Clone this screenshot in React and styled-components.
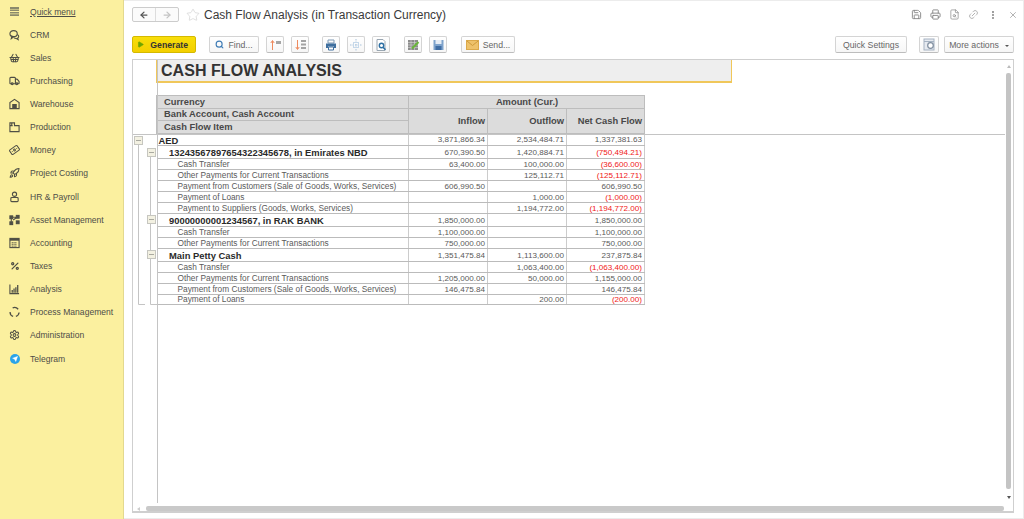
import React from "react";
import styled, { createGlobalStyle } from "styled-components";
import {
  ShoppingBasket, Truck, Banknote, Rocket, Percent, Settings, ArrowLeft, ArrowRight, Star,
  Save, Printer, FileSearch, Link2, EllipsisVertical, X, Search, Play, Send,
} from "lucide-react";

const Global = createGlobalStyle`
  html, body { margin: 0; padding: 0; height: 100%; background: #fff; overflow: hidden; }
  body { font-family: "Liberation Sans", Arial, sans-serif; }
`;
const Page = styled.div`
  width: 1024px; height: 519px; display: flex; box-sizing: border-box; overflow: hidden; color: #333;
`;
const Sidebar = styled.nav`
  width: 124px; flex: none; background: #fbf09f; border-right: 1px solid #e3d98f; box-sizing: border-box;
  display: flex; flex-direction: column;
`;
const NavRow = styled.div`
  height: 23.15px; display: flex; align-items: center; padding-left: 9px; gap: 10px; flex: none;
  font-size: 8.55px; color: #4d4d48; text-decoration: ${p => (p.$link ? "underline" : "none")};
  &:first-child { height: 23px; }
`;
const NavIcon = styled.span`
  width: 11px; height: 11px; display: flex; align-items: center; justify-content: center; color: #4f4f45; flex: none;
`;
const TgDot = styled.span`
  width: 10px; height: 10px; border-radius: 50%; background: #2aa4e8; display: flex; align-items: center; justify-content: center; color: #fff;
`;
const Main = styled.main`
  flex: 1; min-width: 0; display: flex; flex-direction: column; padding: 0 9px 5px 8px;
  border-top: 1px solid #ececec; border-right: 1px solid #ececec; border-bottom: 1px solid #ececec; box-sizing: border-box;
`;
const TitleBar = styled.header`
  height: 27px; flex: none; display: flex; align-items: center;
`;
const NavGroup = styled.div`
  display: flex; width: 47px; height: 15px; border: 1px solid #ccc; border-radius: 2px; box-sizing: border-box; background: #fbfbfb; margin-right: 7px;
`;
const NavBtn = styled.span`
  flex: 1; display: flex; align-items: center; justify-content: center; color: ${p => p.$off ? "#c4c4c4" : "#555"};
  & + & { border-left: 1px solid #ddd; }
`;
const Title = styled.h1`
  margin: 0 0 0 4px; font-size: 12px; font-weight: 400; color: #3a3a3a; white-space: nowrap;
`;
const TopTools = styled.div`
  margin: 0 -4px 0 auto; display: flex; gap: 8.3px; align-items: center; color: #858585;
`;
const TopTool = styled.span`
  width: 11px; height: 11px; display: flex; align-items: center; justify-content: center;
`;
const Toolbar = styled.div`
  height: 17px; margin-top: 8px; flex: none; display: flex; align-items: stretch;
`;
const Btn = styled.button`
  height: 17px; box-sizing: border-box; padding: 0; margin: 0 0 0 ${p => p.$gap || 0}px;
  width: ${p => p.$w}px; display: flex; align-items: center; justify-content: center; gap: 4px; flex: none;
  background: linear-gradient(#fff, #f6f6f6); border: 1px solid #d4d4d4; border-bottom-color: #bdbdbd; border-radius: 2px;
  font: 8.7px "Liberation Sans", Arial, sans-serif; color: #666;
`;
const Generate = styled(Btn)`
  background: linear-gradient(#f8de0a, #f3cf00); border-color: #d4b900; color: #333; font-weight: 700;
`;
const Caret = styled.span`
  width: 0; height: 0; border-left: 2px solid transparent; border-right: 2px solid transparent; border-top: 2px solid #555; margin-left: 2px; margin-top: 2px;
`;
const Spacer = styled.div` margin-left: auto; `;
const Panel = styled.section`
  position: relative; flex: 1; margin-top: 6px; border: 1px solid #cfcfcf; border-bottom-width: 2px; box-sizing: border-box; overflow: hidden; background: #fff;
`;
const Sheet = styled.div`
  padding-left: 23px;
`;
const Heading = styled.div`
  width: 576px; height: 23px; box-sizing: border-box; border: 1px solid #f0c75a; border-top: 0; border-bottom-width: 2px; background: #eee;
  font-size: 16px; font-weight: 700; color: #333; padding: 2px 0 0 4px; line-height: 18px; letter-spacing: 0.05px;
`;
const Table = styled.table`
  border-collapse: collapse; table-layout: fixed; width: 488px; margin-top: 12px; font-size: 8px; color: #444;
`;
const Th = styled.th`
  height: ${p => p.$h || 12.6}px; padding: 0 2px 0 ${p => p.$left ? 7 : 3}px; box-sizing: border-box; background: #dcdcdc; border: 1px solid #bdbdbd;
  font-size: 9.35px; font-weight: 700; color: #484848; text-align: ${p => p.$align || "left"}; white-space: nowrap; overflow: hidden; line-height: 10px;
`;
const Row = styled.tr`
  height: ${p => p.$h}px;
`;
const Name = styled.td`
  padding: ${p => p.$bold ? 1 : 0}px 0 0 ${p => p.$indent}px; box-sizing: border-box; border-top: 1px solid #bbb; border-bottom: 1px solid #bbb; border-right: 1px solid #ccc;
  font-size: ${p => p.$bold ? 9.4 : 8.3}px; font-weight: ${p => p.$bold ? 700 : 400}; color: ${p => p.$bold ? "#2a2a2a" : "#5a5a5a"}; white-space: nowrap; overflow: hidden; line-height: 9px;
`;
const Num = styled.td`
  padding: 0 2px 0 0; box-sizing: border-box; border: 1px solid #ccc; border-top-color: #bbb; border-bottom-color: #bbb; text-align: right;
  font-size: 8.1px; color: ${p => p.$red ? "#f01818" : "#5a5a5a"}; white-space: nowrap; overflow: hidden; line-height: 9px;
`;
const Outline = styled.svg`
  position: absolute; left: 0; top: 0; pointer-events: none;
`;
const VTrack = styled.div`
  position: absolute; right: 2px; top: 13px; width: 5px; height: 416px; background: #c4c4c4; border-radius: 2px;
`;
const HTrack = styled.div`
  position: absolute; left: 13px; bottom: 0; width: 858px; height: 5px; background: #c9c9c9; border-radius: 2px;
`;
const Arrow = styled.span`
  position: absolute; width: 0; height: 0; border-left: 2px solid transparent; border-right: 2px solid transparent;
  ${p => p.$up ? "border-bottom: 3px solid #bbb; top: 5px; right: 2.5px;" : "border-top: 3px solid #555; bottom: 12px; right: 2.5px;"}
`;
const LeftArrow = styled.span`
  position: absolute; left: 4px; bottom: 0.5px; width: 0; height: 0; border-top: 2px solid transparent; border-bottom: 2px solid transparent; border-right: 3px solid #ccc;
`;

const Ico = ({ children, sw = 1.2 }) => (
  <svg width="12" height="12" viewBox="0 0 12 12" fill="none" stroke="currentColor" strokeWidth={sw}>{children}</svg>
);
const MenuIcon = () => <svg width="11" height="9" viewBox="0 0 11 9"><path d="M1 0h9v2H1zM1 2.5h9v1.500H1zM1 5h9v1.500H1zM1 7.300h9V9H1z" fill="#8b8a6c" /></svg>;
const CrmIcon = () => <Ico><ellipse cx="5" cy="4.500" rx="4" ry="3.300" /><path d="M3 7.500L2.500 10 5 8M9 5.500c2 1 2 3 .5 3.800L10 11 8 9.800c-1 0-2-.3-2.500-1" /></Ico>;
const WarehouseIcon = () => <Ico><path d="M1 11V4.500L6 1l5 3.500V11z" /><path d="M3.500 11V6h5v5" fill="currentColor" stroke="none" /></Ico>;
const ProductionIcon = () => <Ico><path d="M1 11V1.500h5V4.500h5V11z" /><path d="M3 1.500V4.500M1 4.500h3" /></Ico>;
const PersonIcon = () => <Ico><circle cx="6" cy="3" r="2.300" /><rect x="2" y="6.500" width="8" height="4.500" rx="1" /></Ico>;
const AssetIcon = () => (
  <Ico>
    <rect x="1" y="1.500" width="3" height="3" fill="currentColor" /><rect x="8" y="1" width="3" height="3" fill="currentColor" />
    <rect x="1" y="8" width="3" height="3" fill="currentColor" /><rect x="8" y="7" width="3" height="3" fill="currentColor" />
    <path d="M2.500 4.500V8M4 3h4M4.500 6L8 3.500" />
  </Ico>
);
const CalendarIcon = () => <Ico><rect x="1" y="1" width="10" height="10" /><path d="M1 2.500h10" strokeWidth="2" /><path d="M3 5.500h6M3 7.500h6M3 9.500h6" strokeDasharray="1 1" strokeWidth="1.300" /></Ico>;
const AnalysisIcon = () => <Ico><path d="M1 1v10h10" /><path d="M3.500 10V7M5.500 10V5.500M7.500 10V4M9.500 10V1.500" strokeWidth="1.400" /></Ico>;
const ProcessIcon = () => <Ico sw={1.4}><path d="M4 1.500A5 5 0 0 1 10 3M11 6.500A5 5 0 0 1 7.500 10.800M4.500 10.800A5 5 0 0 1 1.200 6" /></Ico>;

const nav = [
  ["Quick menu", <MenuIcon />, true],
  ["CRM", <CrmIcon />],
  ["Sales", <ShoppingBasket size={12} strokeWidth={2.2} />],
  ["Purchasing", <Truck size={12} strokeWidth={2.4} />],
  ["Warehouse", <WarehouseIcon />],
  ["Production", <ProductionIcon />],
  ["Money", <Banknote size={12} strokeWidth={2.2} style={{ transform: "rotate(-35deg)" }} />],
  ["Project Costing", <Rocket size={12} strokeWidth={2.2} />],
  ["HR & Payroll", <PersonIcon />],
  ["Asset Management", <AssetIcon />],
  ["Accounting", <CalendarIcon />],
  ["Taxes", <Percent size={10} strokeWidth={3} />],
  ["Analysis", <AnalysisIcon />],
  ["Process Management", <ProcessIcon />],
  ["Administration", <Settings size={12} strokeWidth={2.2} />],
  ["Telegram", <TgDot><Send size={6} fill="#fff" strokeWidth={1.5} /></TgDot>],
];
const rows = [
  ["AED", 1, 2, 12, "3,871,866.34", "2,534,484.71", "1,337,381.63"],
  ["13243567897654322345678, in Emirates NBD", 1, 12.5, 13, "670,390.50", "1,420,884.71", "(750,494.21)"],
  ["Cash Transfer", 0, 21, 11, "63,400.00", "100,000.00", "(36,600.00)"],
  ["Other Payments for Current Transactions", 0, 21, 11, "", "125,112.71", "(125,112.71)"],
  ["Payment from Customers (Sale of Goods, Works, Services)", 0, 21, 11, "606,990.50", "", "606,990.50"],
  ["Payment of Loans", 0, 21, 11, "", "1,000.00", "(1,000.00)"],
  ["Payment to Suppliers (Goods, Works, Services)", 0, 21, 11, "", "1,194,772.00", "(1,194,772.00)"],
  ["90000000001234567, in RAK BANK", 1, 12.5, 13, "1,850,000.00", "", "1,850,000.00"],
  ["Cash Transfer", 0, 21, 11, "1,100,000.00", "", "1,100,000.00"],
  ["Other Payments for Current Transactions", 0, 21, 11, "750,000.00", "", "750,000.00"],
  ["Main Petty Cash", 1, 12.5, 13, "1,351,475.84", "1,113,600.00", "237,875.84"],
  ["Cash Transfer", 0, 21, 11, "", "1,063,400.00", "(1,063,400.00)"],
  ["Other Payments for Current Transactions", 0, 21, 11, "1,205,000.00", "50,000.00", "1,155,000.00"],
  ["Payment from Customers (Sale of Goods, Works, Services)", 0, 21, 11, "146,475.84", "", "146,475.84"],
  ["Payment of Loans", 0, 21, 10, "", "200.00", "(200.00)"],
];
const Minus = ({ x, y }) => (
  <g>
    <rect x={x + 0.5} y={y + 0.5} width="8" height="8" fill="#f3f1e2" stroke="#c6c6c0" />
    <path d={`M${x + 2} ${y + 4.5}h5`} stroke="#a9a9a0" />
  </g>
);
const Bars = ({ flip }) => (
  <svg width="13" height="12" viewBox="0 0 13 12">
    <path d={flip ? "M3.500 1v9M1.800 8L3.500 10.500 5.200 8" : "M3.500 11V2M1.800 4L3.500 1.500 5.200 4"} stroke="#ee8a5e" fill="none" />
    {flip ? <path d="M7 1h5v2H7zM7 4.500h5v2H7zM7 8h5v2H7z" fill="#a5a5a5" /> : <path d="M7 2h5v3H7z" fill="#a5a5a5" />}
  </svg>
);
const PrintIcon = () => (
  <svg width="12" height="12" viewBox="0 0 12 12">
    <path d="M3 1h6v3H3z" fill="none" stroke="#7d99b5" />
    <path d="M1 4.500h10V9H9v-1.500H3V9H1z" fill="#3f6f9f" />
    <path d="M3.500 8h5v3h-5z" fill="#fff" stroke="#3f6f9f" />
  </svg>
);
const FitIcon = () => (
  <svg width="12" height="12" viewBox="0 0 12 12" fill="none" stroke="#a9c3dc">
    <path d="M6 0v12M0 6h12" strokeDasharray="1.500 1" />
    <rect x="3.500" y="3.500" width="5" height="5" stroke="#c5d8ea" />
  </svg>
);
const PreviewIcon = () => (
  <svg width="12" height="12" viewBox="0 0 12 12" fill="none">
    <path d="M2 .5h6l2 2v9H2z" stroke="#9aa7b2" fill="#fff" />
    <circle cx="6.500" cy="6.500" r="2.200" stroke="#2d6fa3" strokeWidth="1.400" />
    <path d="M8 8.200l2.500 2.500" stroke="#2d6fa3" strokeWidth="1.600" />
  </svg>
);
const Edit = () => (
  <svg width="13" height="12" viewBox="0 0 13 12">
    <rect x="1" y="1" width="10" height="10" fill="#8c8c8c" />
    <path d="M1 3.500h10M1 6h10M1 8.500h10M4 1v10M7.500 1v10" stroke="#d8d8d8" strokeWidth=".6" />
    <path d="M5 9.500l6.500-6.500" stroke="#6ab53a" strokeWidth="2.200" />
  </svg>
);
const Disk = () => (
  <svg width="11" height="12" viewBox="0 0 11 12">
    <rect x=".5" y="1" width="10" height="10" fill="#7ea3cc" /><rect x="2.500" y="1" width="6" height="4" fill="#e6edf5" /><rect x="2.500" y="7" width="6" height="4" fill="#3f6da3" />
  </svg>
);
const Envelope = () => (
  <svg width="13" height="10" viewBox="0 0 13 10">
    <rect x=".5" y=".5" width="12" height="9" fill="#eec26a" stroke="#dba94a" />
    <path d="M1 1l5.500 4.500L12 1" fill="none" stroke="#cf9a3a" />
  </svg>
);
const Camera = () => (
  <svg width="13" height="13" viewBox="0 0 13 13">
    <rect x="1" y="1" width="10" height="11" fill="#e6eaf0" stroke="#a5b2c2" /><circle cx="7.500" cy="7.500" r="2.800" fill="#fff" stroke="#7f8d9e" strokeWidth="1.200" /><path d="M1 3.500h10" stroke="#a5b2c2" />
  </svg>
);

export default function App() {
  return (
    <Page>
      <Global />
      <Sidebar>
        {nav.map(([t, ic, link]) => (
          <NavRow key={t} $link={link}><NavIcon>{ic}</NavIcon><span>{t}</span></NavRow>
        ))}
      </Sidebar>
      <Main>
        <TitleBar>
          <NavGroup>
            <NavBtn><ArrowLeft size={10} strokeWidth={3} /></NavBtn>
            <NavBtn $off><ArrowRight size={10} strokeWidth={3} /></NavBtn>
          </NavGroup>
          <Star size={14} strokeWidth={1} color="#c8c8c8" />
          <Title>Cash Flow Analysis (in Transaction Currency)</Title>
          <TopTools>
            <TopTool><Save size={11} /></TopTool>
            <TopTool><Printer size={11} /></TopTool>
            <TopTool><FileSearch size={11} strokeWidth={1.5} /></TopTool>
            <TopTool><Link2 size={11} style={{ transform: "rotate(-45deg)" }} color="#b0b0b0" /></TopTool>
            <TopTool><EllipsisVertical size={10} strokeWidth={3} /></TopTool>
            <TopTool><X size={10} strokeWidth={1.5} /></TopTool>
          </TopTools>
        </TitleBar>
        <Toolbar>
          <Generate $w={64}><Play size={7} color="#6ea500" fill="#6ea500" style={{ marginLeft: -3 }} />&nbsp;Generate</Generate>
          <Btn $w={50} $gap={13}><Search size={9} color="#3f7cb5" strokeWidth={3} />Find...</Btn>
          <Btn $w={18} $gap={7}><Bars /></Btn>
          <Btn $w={18} $gap={7}><Bars flip /></Btn>
          <Btn $w={18} $gap={13}><PrintIcon /></Btn>
          <Btn $w={18} $gap={7}><FitIcon /></Btn>
          <Btn $w={18} $gap={7}><PreviewIcon /></Btn>
          <Btn $w={18} $gap={14}><Edit /></Btn>
          <Btn $w={18} $gap={7}><Disk /></Btn>
          <Btn $w={54} $gap={14}><Envelope />Send...</Btn>
          <Spacer />
          <Btn $w={72}>Quick Settings</Btn>
          <Btn $w={20} $gap={12}><Camera /></Btn>
          <Btn $w={70} $gap={5}>More actions<Caret /></Btn>
        </Toolbar>
        <Panel>
          <Sheet>
            <Heading>CASH FLOW ANALYSIS</Heading>
            <Table>
              <colgroup><col width="252" /><col width="79" /><col width="79" /><col width="78" /></colgroup>
              <thead>
                <tr><Th $left>Currency</Th><Th colSpan={3} $align="center">Amount (Cur.)</Th></tr>
                <tr><Th $left>Bank Account, Cash Account</Th><Th rowSpan={2} $align="right">Inflow</Th><Th rowSpan={2} $align="right">Outflow</Th><Th rowSpan={2} $align="right">Net Cash Flow</Th></tr>
                <tr><Th $left $h={13}>Cash Flow Item</Th></tr>
              </thead>
              <tbody>
                {rows.map(([name, bold, ind, h, a, b, c], i) => (
                  <Row key={i} $h={h}>
                    <Name $bold={bold} $indent={ind}>{name}</Name>
                    <Num>{a}</Num><Num>{b}</Num><Num $red={c.startsWith("(")}>{c}</Num>
                  </Row>
                ))}
              </tbody>
            </Table>
          </Sheet>
          <Outline width="880" height="452" viewBox="0 0 880 452" fill="none" stroke="#c4c4c4">
            <path d="M0 74.500H872M24.500 0V443" />
            <path d="M5.500 84V244.500H12M17.500 97V244.500H24" />
            <Minus x={1} y={76} /><Minus x={14} y={88} /><Minus x={14} y={155} /><Minus x={14} y={190} />
          </Outline>
          <Arrow $up /><VTrack /><Arrow /><LeftArrow /><HTrack />
        </Panel>
      </Main>
    </Page>
  );
}
